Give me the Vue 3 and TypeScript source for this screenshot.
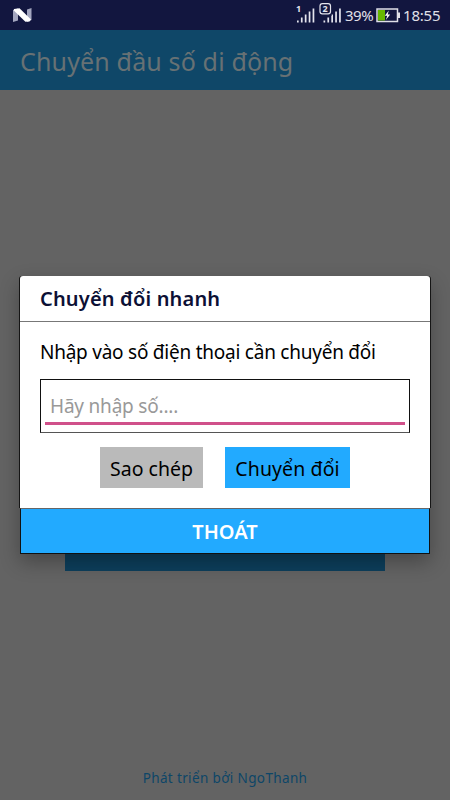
<script setup lang="ts">
import { ref } from 'vue'

const phone = ref<string>('')
const bars: number[] = [2, 5, 8, 11, 14]
</script>

<template>
  <div class="screen">
    <header class="status">
      <svg class="logo" width="20" height="16" viewBox="0 0 20 16">
        <path d="M0 2 L5 0.5 V12.5 L0 14Z M14 1.5 L18.5 0 V12 L14 14Z" fill="#a3a6bf" />
        <path d="M1 1 L6.5 0.2 L18 11.5 L16.5 13.6 L12.4 13.8 L0.8 2.6Z" fill="#fff" />
      </svg>
      <div class="indicators">
        <svg class="signals" width="46" height="20" viewBox="0 0 46 20">
          <g fill="#e4e4ed">
            <rect v-for="(h, i) in bars" :key="'a' + i" :x="1 + i * 3.9" :y="18.5 - h" width="1.7" :height="h" />
            <rect v-for="(h, i) in bars" :key="'b' + i" :x="27.5 + i * 3.9" :y="18.5 - h" width="1.7" :height="h" />
            <text x="0" y="8" class="sim">1</text>
          </g>
          <rect x="23" y="-1" width="12.5" height="13" fill="#12163f" />
          <rect x="24" y="-0.3" width="10.5" height="10.2" rx="2.4" fill="#12163f" stroke="#e4e4ed" stroke-width="1.2" />
          <text x="26.5" y="8.2" class="sim" fill="#e4e4ed">2</text>
        </svg>
        <span class="percent">39%</span>
        <svg class="battery" width="24" height="15" viewBox="0 0 24 15">
          <rect x="1" y="1" width="20.5" height="12.5" fill="#12163f" stroke="#e0e0e8" stroke-width="1.5" />
          <rect x="2" y="2" width="7" height="10.5" fill="#67b700" />
          <rect x="22" y="4.5" width="2" height="5.5" fill="#e0e0e8" />
          <path d="M12.8 2.5 L8.8 7.8 H11.3 L9.8 12 L14.2 6.5 H11.7Z" fill="#fff" />
        </svg>
        <span class="clock">18:55</span>
      </div>
    </header>
    <div class="appbar"><h1>Chuyển đầu số di động</h1></div>
    <main class="content">
      <div class="page-button"></div>
      <section class="dialog" role="dialog">
        <div class="dialog-body">
          <h2><span>Chuyển đổi nhanh</span></h2>
          <p class="prompt">Nhập vào số điện thoại cần chuyển đổi</p>
          <div class="field">
            <input v-model="phone" type="tel" placeholder="Hãy nhập số...." />
          </div>
          <div class="actions">
            <button class="copy">Sao chép</button>
            <button class="convert">Chuyển đổi</button>
          </div>
        </div>
        <button class="exit"><span>THOÁT</span></button>
      </section>
    </main>
    <footer>Phát triển bởi NgoThanh</footer>
  </div>
</template>

<style>
body {
  margin: 0;
}
</style>

<style scoped>
.screen {
  position: relative;
  display: flex;
  flex-direction: column;
  width: 450px;
  height: 800px;
  overflow: hidden;
  background: #636363;
  font-family: 'Noto Sans', sans-serif;
}
.status {
  display: flex;
  justify-content: space-between;
  height: 30px;
  box-sizing: border-box;
  padding: 0 10px 0 13px;
  background: #12163f;
  color: #e0e0e8;
}
.logo {
  margin-top: 8px;
}
.indicators {
  display: flex;
  align-items: flex-start;
}
.signals {
  margin-top: 4px;
  overflow: visible;
}
.sim {
  font-size: 9px;
  font-weight: 700;
}
.percent,
.clock {
  font-size: 15px;
  line-height: 31px;
  white-space: nowrap;
}
.percent {
  width: 29px;
  margin-left: 3px;
  letter-spacing: -0.5px;
}
.battery {
  margin: 8px 0 0 2px;
}
.clock {
  width: 37px;
  margin-left: 3px;
  letter-spacing: -0.2px;
}
.appbar {
  height: 60px;
  padding-left: 20px;
  background: #0f4768;
}
h1 {
  margin: 0;
  color: #677174;
  font-size: 25px;
  font-weight: 400;
  line-height: 62px;
  letter-spacing: 0.15px;
  white-space: nowrap;
}
.content {
  flex: 1;
}
.page-button {
  position: absolute;
  left: 65px;
  top: 531px;
  width: 320px;
  height: 40px;
  background: #0d3f5c;
}
.dialog {
  position: absolute;
  left: 20px;
  top: 276px;
  width: 410px;
  height: 278px;
  border-radius: 3px 3px 0 0;
  box-shadow: 0 8px 20px rgba(0, 0, 0, 0.3);
}
.dialog-body {
  box-sizing: border-box;
  height: 232px;
  border-radius: 3px 3px 0 0;
  background: #fff;
  box-shadow: -1px 0 #151515, 1px 0 #151515;
}
h2 {
  height: 45px;
  margin: 0;
  padding-left: 20px;
  border-bottom: 1px solid #777;
  color: #0c1035;
  font-size: 20px;
  font-weight: 600;
  line-height: 46px;
  letter-spacing: 0.17px;
}
.prompt {
  margin: 0;
  padding: 15px 0 0 20px;
  color: #000;
  font-size: 19px;
  line-height: 30px;
  letter-spacing: -0.24px;
  white-space: nowrap;
}
.field {
  box-sizing: border-box;
  width: 370px;
  height: 54px;
  margin: 12px 0 0 20px;
  padding: 4px;
  border: 1px solid #111;
  border-bottom-color: #555;
}
input {
  display: block;
  box-sizing: border-box;
  width: 360px;
  height: 41px;
  padding: 5px 5px 0;
  border: 0;
  border-bottom: 3px solid #d0508a;
  outline: 0;
  background: none;
  font: 19px 'Noto Sans', sans-serif;
  letter-spacing: -0.2px;
}
input::placeholder {
  color: #999;
  opacity: 1;
}
.actions {
  display: flex;
  gap: 22px;
  margin: 14px 0 0 80px;
}
button {
  box-sizing: border-box;
  padding: 0;
  border: 0;
  border-radius: 0;
  font-family: 'Noto Sans', sans-serif;
  font-size: 19.5px;
  white-space: nowrap;
}
.copy,
.convert {
  height: 41px;
  padding-top: 2px;
  color: #000;
}
.copy {
  width: 103px;
  background: #bababa;
}
.convert {
  width: 125px;
  background: #22aaff;
  letter-spacing: 0.1px;
}
.exit {
  display: block;
  width: 410px;
  height: 46px;
  border: 1px solid #111;
  border-top-color: #666;
  background: #22aaff;
  color: #fff;
  font-size: 20px;
  font-weight: 600;
}
footer {
  height: 43px;
  color: #0d4668;
  font-size: 13.5px;
  line-height: 42px;
  letter-spacing: 0.36px;
  text-align: center;
}
</style>
